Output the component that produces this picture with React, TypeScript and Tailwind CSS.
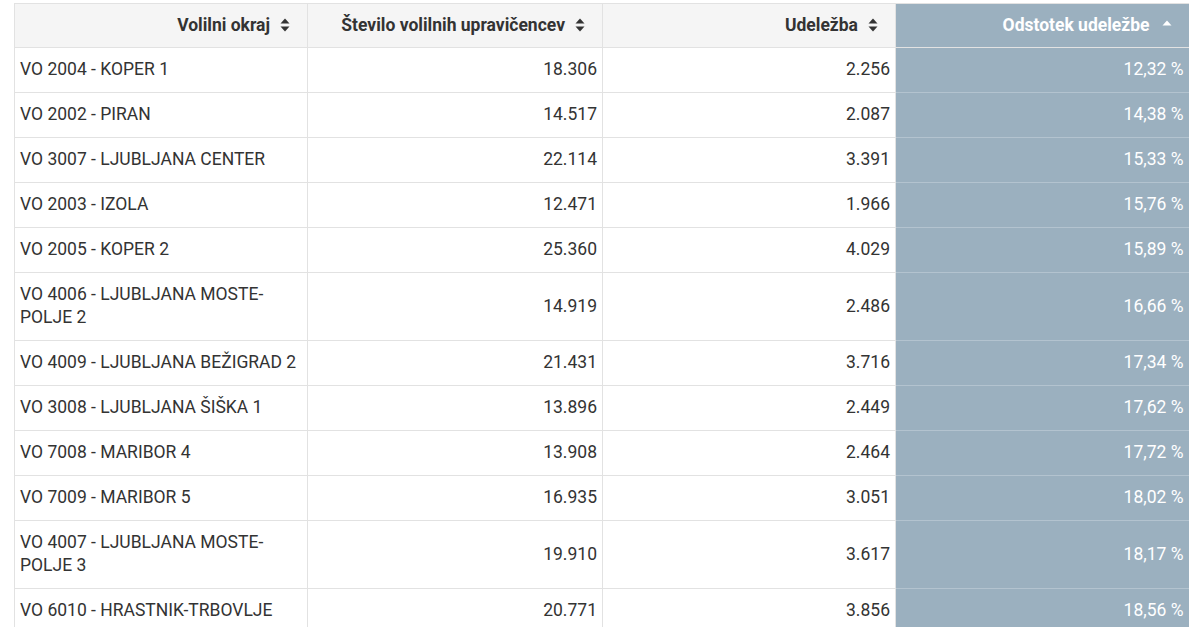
import React from "react";

const rows: [string, string, string, string][] = [
  ["VO 2004 - KOPER 1", "18.306", "2.256", "12,32 %"],
  ["VO 2002 - PIRAN", "14.517", "2.087", "14,38 %"],
  ["VO 3007 - LJUBLJANA CENTER", "22.114", "3.391", "15,33 %"],
  ["VO 2003 - IZOLA", "12.471", "1.966", "15,76 %"],
  ["VO 2005 - KOPER 2", "25.360", "4.029", "15,89 %"],
  ["VO 4006 - LJUBLJANA MOSTE-POLJE 2", "14.919", "2.486", "16,66 %"],
  ["VO 4009 - LJUBLJANA BEŽIGRAD 2", "21.431", "3.716", "17,34 %"],
  ["VO 3008 - LJUBLJANA ŠIŠKA 1", "13.896", "2.449", "17,62 %"],
  ["VO 7008 - MARIBOR 4", "13.908", "2.464", "17,72 %"],
  ["VO 7009 - MARIBOR 5", "16.935", "3.051", "18,02 %"],
  ["VO 4007 - LJUBLJANA MOSTE-POLJE 3", "19.910", "3.617", "18,17 %"],
  ["VO 6010 - HRASTNIK-TRBOVLJE", "20.771", "3.856", "18,56 %"],
];

function SortBoth() {
  return (
    <svg width="10" height="14" viewBox="0 0 10 14" className="inline-block ml-[10px] -mt-[3px]">
      <path d="M5 0.5 L9.5 5.5 L0.5 5.5 Z" fill="#333" />
      <path d="M5 13.5 L9.5 8.5 L0.5 8.5 Z" fill="#333" />
    </svg>
  );
}

function SortUp() {
  return (
    <svg width="10" height="6" viewBox="0 0 10 6" className="inline-block ml-[12px] -mt-[8px]">
      <path d="M5 0.5 L9.5 5.5 L0.5 5.5 Z" fill="#fff" />
    </svg>
  );
}

export default function App() {
  return (
    <div className="w-[1200px] h-[627px] overflow-hidden bg-white pl-[14px] pt-[3px]" style={{ fontFamily: "Roboto, 'Noto Sans', sans-serif" }}>
      <table className="table-fixed border-collapse w-[1174px] text-[17.5px] text-[#333]">
        <colgroup>
          <col className="w-[293px]" />
          <col className="w-[295px]" />
          <col className="w-[293px]" />
          <col className="w-[293px]" />
        </colgroup>
        <thead>
          <tr className="h-[44px]">
            <th className="border border-[#e2e2e2] bg-[#f5f5f5] text-right font-bold text-[17.5px] pr-[17px] pl-[5px]">
              Volilni okraj<SortBoth />
            </th>
            <th className="border border-[#e2e2e2] bg-[#f5f5f5] text-right font-bold text-[17.5px] pr-[17px] pl-[5px]">
              Število volilnih upravičencev<SortBoth />
            </th>
            <th className="border border-[#e2e2e2] bg-[#f5f5f5] text-right font-bold text-[17.5px] pr-[17px] pl-[5px]">
              Udeležba<SortBoth />
            </th>
            <th className="border border-[#e2e2e2] border-r-0 bg-[#9bb0bf] text-white text-right font-bold text-[17.5px] pr-[17px] pl-[5px]">
              Odstotek udeležbe<SortUp />
            </th>
          </tr>
        </thead>
        <tbody>
          {rows.map((r, i) => (
            <tr key={i}>
              <td className="border border-[#e2e2e2] pt-[10px] pb-[11px] leading-[23px] pl-[5px] pr-[8px] text-left">{r[0]}</td>
              <td className="border border-[#e2e2e2] pt-[10px] pb-[11px] leading-[23px] px-[5px] text-right">{r[1]}</td>
              <td className="border border-[#e2e2e2] pt-[10px] pb-[11px] leading-[23px] px-[5px] text-right">{r[2]}</td>
              <td className="border border-[#b3c3cf] border-r-0 bg-[#9bb0bf] text-white pt-[10px] pb-[11px] leading-[23px] px-[5px] text-right">{r[3]}</td>
            </tr>
          ))}
        </tbody>
      </table>
    </div>
  );
}
